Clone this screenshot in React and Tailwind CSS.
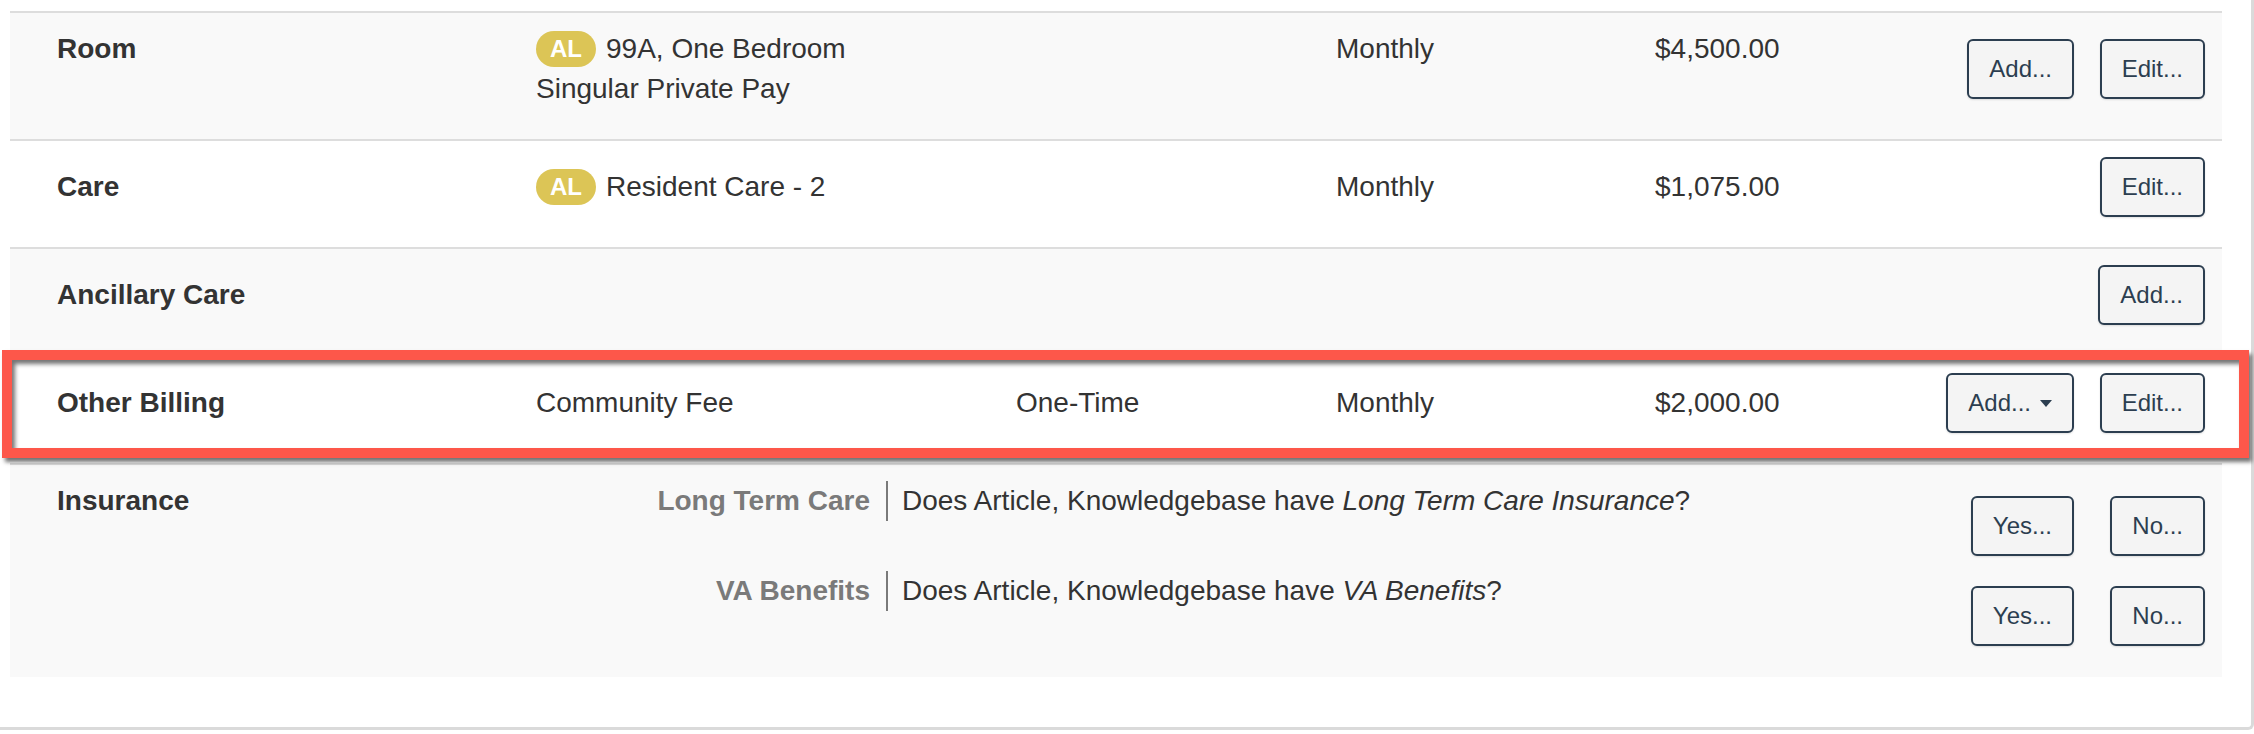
import React from 'react';

const Btn = ({ children, caret }) => (
  <button className="inline-flex items-center rounded-[6px] border-2 border-[#2c3e50] bg-[#f4f4f4] px-[20px] py-[10px] text-[24px] leading-[36px] text-[#2c3e50] shadow-[0_1px_2px_rgba(0,0,0,0.12)]">
    {children}
    {caret && (
      <span className="ml-[9px] h-0 w-0 border-x-[6px] border-t-[7px] border-x-transparent border-t-[#2c3e50]" />
    )}
  </button>
);

const Badge = () => (
  <span className="mr-[10px] inline-flex h-[36px] items-center rounded-full bg-[#dcc556] px-[14px] text-[24px] font-bold leading-none text-white">
    AL
  </span>
);

const ButtonPair = ({ first, second, className = '' }) => (
  <div className={`flex w-[262px] shrink-0 ${className}`}>
    <div className="flex w-[131px] justify-end">{first}</div>
    <div className="flex w-[131px] justify-end">{second}</div>
  </div>
);

const BillingRow = ({ striped, alignTop, label, desc, type, freq, amount, add, edit, highlight }) => {
  const textAlign = alignTop ? 'self-start' : '';
  return (
    <div
      className={`relative flex items-center border-t-2 border-[#ddd] pl-[47px] pr-[17px] pt-4 pb-[30px] ${
        striped ? 'bg-[#f9f9f9]' : 'bg-white'
      }`}
    >
      <div className={`w-[479px] shrink-0 font-bold ${textAlign}`}>{label}</div>
      <div className={`w-[480px] shrink-0 ${textAlign}`}>{desc}</div>
      <div className={`w-[320px] shrink-0 ${textAlign}`}>{type}</div>
      <div className={`w-[319px] shrink-0 ${textAlign}`}>{freq}</div>
      <div className={`flex-1 ${textAlign}`}>{amount}</div>
      <ButtonPair first={add} second={edit} />

      {/* annotation box drawn over the row */}
      {highlight && (
        <div className="pointer-events-none absolute -top-[7px] -left-[8px] -right-[27px] bottom-[5px] border-[10px] border-[#fd574a] shadow-[3px_4px_4px_rgba(0,0,0,0.55),inset_3px_4px_4px_rgba(0,0,0,0.55)]" />
      )}
    </div>
  );
};

const questions = [
  { label: 'Long Term Care', item: 'Long Term Care Insurance' },
  { label: 'VA Benefits', item: 'VA Benefits' },
];

export default function App() {
  return (
    <div className="min-h-[734px] bg-white font-['Liberation_Sans',Arial,sans-serif] text-[28px] leading-[40px] text-[#333]">
      <div className="rounded-br-[6px] border-r-[3px] border-b-[3px] border-[#dadada] pt-[11px] pr-[29px] pb-[50px] pl-[10px]">
        <BillingRow
          striped
          alignTop
          label="Room"
          desc={
            <div>
              <div className="flex h-[40px] items-center">
                <Badge />
                <span>99A, One Bedroom</span>
              </div>
              <div>Singular Private Pay</div>
            </div>
          }
          freq="Monthly"
          amount="$4,500.00"
          add={<Btn>Add...</Btn>}
          edit={<Btn>Edit...</Btn>}
        />
        <BillingRow
          label="Care"
          desc={
            <div className="flex h-[40px] items-center">
              <Badge />
              <span>Resident Care - 2</span>
            </div>
          }
          freq="Monthly"
          amount="$1,075.00"
          edit={<Btn>Edit...</Btn>}
        />
        <BillingRow striped label="Ancillary Care" edit={<Btn>Add...</Btn>} />
        <BillingRow
          highlight
          label="Other Billing"
          desc="Community Fee"
          type="One-Time"
          freq="Monthly"
          amount="$2,000.00"
          add={<Btn caret>Add...</Btn>}
          edit={<Btn>Edit...</Btn>}
        />

        {/* Insurance */}
        <div className="flex items-start border-t-2 border-[#ddd] bg-[#f9f9f9] pt-4 pr-[17px] pb-[31px] pl-[47px]">
          <div className="w-[479px] shrink-0 font-bold">Insurance</div>
          <div className="flex flex-1 flex-col gap-[15px]">
            {questions.map((q) => (
              <div key={q.label} className="flex items-start">
                <div className="w-[334px] shrink-0 text-right font-bold text-[#7a7a7a]">{q.label}</div>
                <div className="ml-4 border-l-2 border-[#7a7a7a] pl-[14px]">
                  Does Article, Knowledgebase have <em>{q.item}</em>?
                </div>
                <div className="flex-1" />
                <ButtonPair className="mt-[15px]" first={<Btn>Yes...</Btn>} second={<Btn>No...</Btn>} />
              </div>
            ))}
          </div>
        </div>
      </div>
    </div>
  );
}
